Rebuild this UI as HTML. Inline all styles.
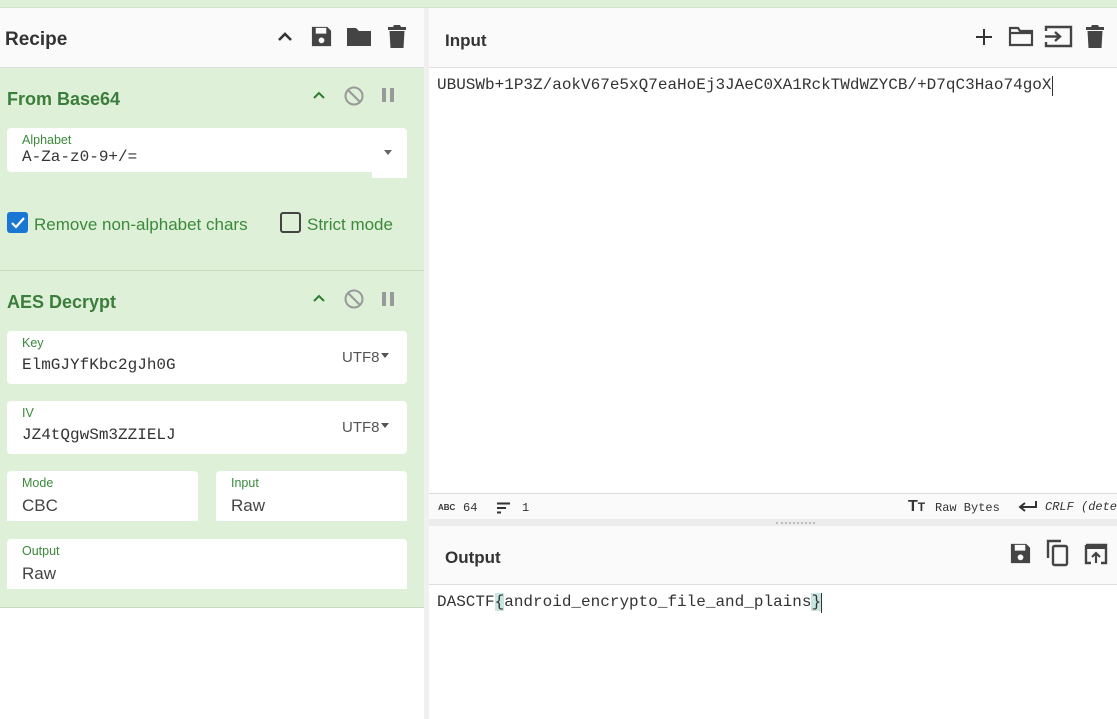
<!DOCTYPE html>
<html><head><meta charset="utf-8"><style>
*{box-sizing:border-box;margin:0;padding:0}
body{width:1117px;height:719px;overflow:hidden;background:#fff;font-family:"Liberation Sans",sans-serif;position:relative}
.abs{position:absolute}
.top{left:0;top:0;width:1117px;height:8px;background:#dff0d8;border-bottom:1px solid #d4e4cc}
.hdr{background:#fafafa;border-bottom:1px solid #ddd}
.title{font-weight:bold;font-size:19px;color:#333}
.op{background:#dff0d8;border-bottom:1px solid #c9dcc0}
.opt{font-weight:bold;font-size:18px;color:#3b7d3b}
.fld{background:#fff;border-radius:4px}
.lab{font-size:12.5px;color:#3b8a3b}
.val{font-size:17px;color:#444}
.mono{font-family:"Liberation Mono",monospace;color:#333}
.ic{fill:#444}
</style></head><body>
<div class="abs top"></div>
<!-- left -->
<div class="abs hdr" style="left:0;top:8px;width:424px;height:60px"></div>
<div class="abs title" style="left:5px;top:29px">Recipe</div>
<svg class="abs" style="left:275px;top:27px" width="20" height="20" viewBox="0 0 20 20"><path d="M4 13l6-6 6 6" stroke="#333" stroke-width="2.6" fill="none"/></svg>
<svg class="abs" style="left:310px;top:25px" width="23" height="23" viewBox="0 0 24 24"><path class="ic" d="M2 2h16l4 4v16H2z M6 3v6h11V3z M12 13a3 3 0 1 0 .01 0z" fill-rule="evenodd"/></svg>
<svg class="abs" style="left:346px;top:26px" width="26" height="21" viewBox="0 0 26 21"><path class="ic" d="M1 2h9l3 3h12v15H1z"/></svg>
<svg class="abs" style="left:387px;top:25px" width="20" height="23" viewBox="0 0 20 23"><path class="ic" d="M1 2h5l1-2h6l1 2h5v3H1z M2.5 6h15l-1 17h-13z"/></svg>

<div class="abs op" style="left:0;top:68px;width:424px;height:203px"></div>
<div class="abs opt" style="left:7px;top:89px">From Base64</div>
<svg class="abs" style="left:311px;top:88px" width="16" height="14" viewBox="0 0 16 14"><path d="M3 10l5-5 5 5" stroke="#2e7d32" stroke-width="2" fill="none"/></svg>
<svg class="abs" style="left:343px;top:85px" width="22" height="22" viewBox="0 0 22 22"><circle cx="11" cy="11" r="8.5" stroke="#999" stroke-width="2" fill="none"/><path d="M5 5l12 12" stroke="#999" stroke-width="2"/></svg>
<div class="abs" style="left:382px;top:88px;width:4px;height:14px;background:#999"></div>
<div class="abs" style="left:390px;top:88px;width:4px;height:14px;background:#999"></div>
<div class="abs fld" style="left:7px;top:128px;width:400px;height:44px;border-radius:4px 4px 0 4px"></div>
<div class="abs" style="left:372px;top:168px;width:35px;height:10px;background:#fff"></div>
<div class="abs lab" style="left:22px;top:133px">Alphabet</div>
<div class="abs mono" style="left:22px;top:148px;font-size:16px">A-Za-z0-9+/=</div>
<div class="abs" style="left:384px;top:150px;border:4px solid transparent;border-top:5px solid #666"></div>
<div class="abs" style="left:7px;top:212px;width:21px;height:21px;background:#1976d2;border-radius:3px"></div>
<svg class="abs" style="left:9px;top:214px" width="17" height="17" viewBox="0 0 17 17"><path d="M3 9l4 4 8-9" stroke="#fff" stroke-width="2.2" fill="none"/></svg>
<div class="abs" style="left:34px;top:215px;font-size:17px;color:#3b8a3b">Remove non-alphabet chars</div>
<div class="abs" style="left:280px;top:212px;width:21px;height:21px;border:2px solid #444;border-radius:3px"></div>
<div class="abs" style="left:307px;top:215px;font-size:17px;color:#3b8a3b">Strict mode</div>

<div class="abs op" style="left:0;top:271px;width:424px;height:337px"></div>
<div class="abs opt" style="left:7px;top:292px">AES Decrypt</div>
<svg class="abs" style="left:311px;top:291px" width="16" height="14" viewBox="0 0 16 14"><path d="M3 10l5-5 5 5" stroke="#2e7d32" stroke-width="2" fill="none"/></svg>
<svg class="abs" style="left:343px;top:288px" width="22" height="22" viewBox="0 0 22 22"><circle cx="11" cy="11" r="8.5" stroke="#999" stroke-width="2" fill="none"/><path d="M5 5l12 12" stroke="#999" stroke-width="2"/></svg>
<div class="abs" style="left:382px;top:292px;width:4px;height:14px;background:#999"></div>
<div class="abs" style="left:390px;top:292px;width:4px;height:14px;background:#999"></div>

<div class="abs fld" style="left:7px;top:331px;width:400px;height:53px"></div>
<div class="abs lab" style="left:22px;top:336px">Key</div>
<div class="abs mono" style="left:22px;top:356px;font-size:16px">ElmGJYfKbc2gJh0G</div>
<div class="abs" style="left:342px;top:349px;font-size:15px;color:#555">UTF8</div>
<div class="abs" style="left:381px;top:353px;border:4px solid transparent;border-top:5px solid #555"></div>
<div class="abs fld" style="left:7px;top:401px;width:400px;height:53px"></div>
<div class="abs lab" style="left:22px;top:406px">IV</div>
<div class="abs mono" style="left:22px;top:426px;font-size:16px">JZ4tQgwSm3ZZIELJ</div>
<div class="abs" style="left:342px;top:419px;font-size:15px;color:#555">UTF8</div>
<div class="abs" style="left:381px;top:423px;border:4px solid transparent;border-top:5px solid #555"></div>
<div class="abs fld" style="left:7px;top:471px;width:191px;height:50px;border-radius:4px 4px 0 0"></div>
<div class="abs lab" style="left:22px;top:476px">Mode</div>
<div class="abs val" style="left:22px;top:496px">CBC</div>
<div class="abs fld" style="left:216px;top:471px;width:191px;height:50px;border-radius:4px 4px 0 0"></div>
<div class="abs lab" style="left:231px;top:476px">Input</div>
<div class="abs val" style="left:231px;top:496px">Raw</div>
<div class="abs fld" style="left:7px;top:539px;width:400px;height:50px;border-radius:4px 4px 0 0"></div>
<div class="abs lab" style="left:22px;top:544px">Output</div>
<div class="abs val" style="left:22px;top:564px">Raw</div>

<div class="abs" style="left:424px;top:8px;width:5px;height:711px;background:#f0f0f0"></div>
<!-- right -->
<div class="abs hdr" style="left:429px;top:8px;width:688px;height:60px"></div>
<div class="abs title" style="left:445px;top:31px;font-size:17px">Input</div>
<svg class="abs" style="left:974px;top:27px" width="20" height="20" viewBox="0 0 20 20"><path d="M10 2v16M2 10h16" stroke="#333" stroke-width="2"/></svg>
<svg class="abs" style="left:1008px;top:26px" width="26" height="21" viewBox="0 0 26 21"><path d="M2 2h8l2 3h12v14H2z M2 7h22" stroke="#444" stroke-width="2.2" fill="none"/></svg>
<svg class="abs" style="left:1044px;top:25px" width="29" height="23" viewBox="0 0 29 23"><path d="M2 6V2h25v19H2v-4 M1 11.5h14 M11 7l5 4.5-5 4.5" stroke="#444" stroke-width="2.4" fill="none"/></svg>
<svg class="abs" style="left:1085px;top:25px" width="20" height="23" viewBox="0 0 20 23"><path class="ic" d="M1 2h5l1-2h6l1 2h5v3H1z M2.5 6h15l-1 17h-13z"/></svg>
<div class="abs mono" style="left:437px;top:76px;font-size:16px;white-space:nowrap">UBUSWb+1P3Z/aokV67e5xQ7eaHoEj3JAeC0XA1RckTWdWZYCB/+D7qC3Hao74goX</div>
<div class="abs" style="left:1052px;top:76px;width:1px;height:20px;background:#333"></div>

<div class="abs" style="left:429px;top:493px;width:688px;height:26px;background:#fafafa;border-top:1px solid #ddd"></div>
<div class="abs" style="left:438px;top:503px;font-size:8px;font-weight:bold;color:#333">ABC</div>
<div class="abs mono" style="left:463px;top:501px;font-size:12px">64</div>
<svg class="abs" style="left:497px;top:502px" width="14" height="12" viewBox="0 0 14 12"><path d="M0 1.5h13M0 6h9M0 10.5h4" stroke="#333" stroke-width="2"/></svg>
<div class="abs mono" style="left:522px;top:501px;font-size:12px">1</div>
<div class="abs" style="left:908px;top:498px;font-size:16px;font-weight:bold;color:#333">T<span style="font-size:12px">T</span></div>
<div class="abs mono" style="left:935px;top:501px;font-size:12px">Raw Bytes</div>
<svg class="abs" style="left:1018px;top:500px" width="20" height="14" viewBox="0 0 20 14"><path d="M18 1v6H3 M7 3L2 7l5 4" stroke="#333" stroke-width="2" fill="none"/></svg>
<div class="abs mono" style="left:1045px;top:500px;font-size:12px;font-style:italic;white-space:nowrap">CRLF (dete</div>
<div class="abs" style="left:429px;top:519px;width:688px;height:7px;background:#ececec"></div>
<div class="abs" style="left:776px;top:522px;width:39px;height:2px;border-top:2px dotted #bbb"></div>

<div class="abs hdr" style="left:429px;top:526px;width:688px;height:59px"></div>
<div class="abs title" style="left:445px;top:548px;font-size:17px">Output</div>
<svg class="abs" style="left:1009px;top:542px" width="23" height="23" viewBox="0 0 24 24"><path class="ic" d="M2 2h16l4 4v16H2z M6 3v6h11V3z M12 13a3 3 0 1 0 .01 0z" fill-rule="evenodd"/></svg>
<svg class="abs" style="left:1045px;top:538px" width="26" height="30" viewBox="0 0 26 30"><path d="M3 20V3h13" stroke="#444" stroke-width="2.4" fill="none"/><rect x="8" y="8" width="14" height="19" rx="1.5" stroke="#444" stroke-width="2.4" fill="none"/></svg>
<svg class="abs" style="left:1084px;top:542px" width="24" height="24" viewBox="0 0 24 24"><path d="M2 3h20v18h-5M7 21H2V3" stroke="#444" stroke-width="2.4" fill="none"/><path d="M2 3h20v4H2z" fill="#444"/><path d="M12 21v-9M8 15l4-4 4 4" stroke="#444" stroke-width="2.2" fill="none"/></svg>
<div class="abs mono" style="left:437px;top:593px;font-size:16px;white-space:nowrap">DASCTF<span style="background:#c8e6e0">{</span>android_encrypto_file_and_plains<span style="background:#c8e6e0">}</span></div>
<div class="abs" style="left:821px;top:593px;width:1px;height:20px;background:#333"></div>
</body></html>
